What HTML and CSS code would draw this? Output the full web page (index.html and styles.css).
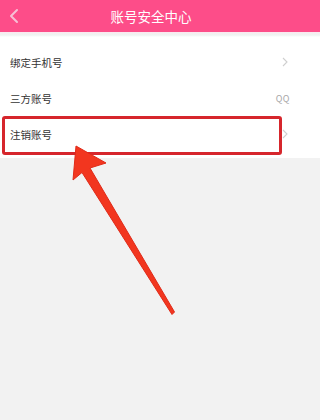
FILE: index.html
```html
<!DOCTYPE html>
<html lang="zh">
<head>
<meta charset="utf-8">
<link rel="stylesheet" href="styles.css">
</head>
<body>
<div class="page">
  <header class="topbar">
    <div class="inner">
      <svg class="back" width="12" height="16" viewBox="0 0 12 16"><path d="M9 2 L3 8 L9 14" fill="none" stroke="#f6bfd5" stroke-width="2" stroke-linecap="round" stroke-linejoin="round"/></svg>
      <div class="title">账号安全中心</div>
    </div>
  </header>
  <div class="shade"></div>
  <section class="list">
    <div class="rows">
      <div class="row"><span class="label">绑定手机号</span><svg class="chev" width="6" height="10" viewBox="0 0 6 10"><path d="M1 1 L5 5 L1 9" fill="none" stroke="#cfcfcf" stroke-width="1.1"/></svg></div>
      <div class="row"><span class="label">三方账号</span><span class="value">QQ</span></div>
      <div class="row"><span class="label">注销账号</span><svg class="chev" width="6" height="10" viewBox="0 0 6 10"><path d="M1 1 L5 5 L1 9" fill="none" stroke="#cfcfcf" stroke-width="1.1"/></svg></div>
    </div>
  </section>
  <div class="highlight"></div>
  <svg class="arrow" width="302" height="420" viewBox="0 0 302 420">
    <polygon points="76,146 106,163 90,168 174.5,312 172,314.5 82,172.5 73,180" fill="#f2361f" stroke="#e02a18" stroke-width="1" stroke-linejoin="round"/>
  </svg>
</div>
</body>
</html>
```
FILE: styles.css
```css
html, body {
  margin: 0;
  padding: 0;
  background: #f2f2f2;
}
.page {
  position: relative;
  width: 100%;
  min-width: 302px;
  height: 420px;
  overflow: hidden;
  background: #f2f2f2;
  font-family: "Noto Sans CJK SC", "Noto Sans", sans-serif;
}
.topbar {
  height: 32px;
  background: #fd4d89;
}
.inner {
  width: 302px;
  height: 32px;
  display: flex;
  align-items: center;
  justify-content: center;
  position: relative;
}
.back {
  position: absolute;
  left: 8px;
  top: 8px;
}
.title {
  color: #ffffff;
  font-size: 13.5px;
  line-height: 16px;
  margin-top: -1px;
}
.shade {
  height: 5px;
  background: linear-gradient(#fbe9ef, #eef3f1 60%, #ffffff);
}
.list {
  background: #ffffff;
  padding-top: 7px;
  height: 114px;
}
.rows {
  width: 302px;
}
.row {
  height: 36px;
  display: flex;
  align-items: center;
  justify-content: space-between;
  padding: 0 12px 0 10px;
}
.label {
  font-size: 10.5px;
  color: #333333;
}
.value {
  font-size: 9px;
  color: #a8a8a8;
  letter-spacing: 0.5px;
}
.chev {
  margin-right: 2px;
}
.highlight {
  position: absolute;
  left: 2px;
  top: 116px;
  width: 274px;
  height: 33px;
  border: 3px solid #d6262c;
  border-radius: 3px;
}
.arrow {
  position: absolute;
  left: 0;
  top: 0;
}
```
